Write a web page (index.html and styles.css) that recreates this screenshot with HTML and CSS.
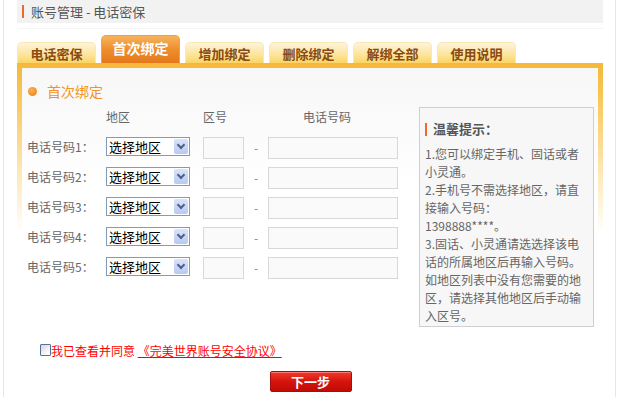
FILE: index.html
```html
<!DOCTYPE html>
<html lang="zh-CN">
<head>
  <meta charset="UTF-8" />
  <title>电话密保</title>
  <link rel="stylesheet" href="styles.css">
</head>
<body>
<div class="frame">

  <div class="crumb"><span class="bar"></span>账号管理 - 电话密保</div>
  <div class="rule"></div>

  <nav class="tabs">
    <a href="#">电话密保</a>
    <a href="#" class="on">首次绑定</a>
    <a href="#">增加绑定</a>
    <a href="#">删除绑定</a>
    <a href="#">解绑全部</a>
    <a href="#">使用说明</a>
  </nav>

  <div class="panel">
    <div class="inner">
      <h2 class="title"><span class="dot"></span>首次绑定</h2>

      <div class="body">
        <div class="form" id="form">
          <div class="row head">
            <span></span>
            <span>地区</span>
            <span>区号</span>
            <span></span>
            <span class="num">电话号码</span>
          </div>
        </div>

        <div class="tips">
          <h3><span class="bar"></span>温馨提示：</h3>
          <p>1.您可以绑定手机、固话或者小灵通。</p>
          <p>2.手机号不需选择地区，请直接输入号码：<br>1398888****。</p>
          <p>3.固话、小灵通请选选择该电话的所属地区后再输入号码。如地区列表中没有您需要的地区，请选择其他地区后手动输入区号。</p>
        </div>
      </div>

      <div class="agree">
        <input type="checkbox" id="agree"><label for="agree">我已查看并同意</label>&nbsp;<a href="#">《完美世界账号安全协议》</a>
      </div>

      <div class="actions">
        <button type="button" class="next">下一步</button>
      </div>
    </div>
  </div>
</div>

<script>
  const form = document.getElementById('form');
  for (let i = 1; i <= 5; i++) {
    const row = document.createElement('div');
    row.className = 'row';
    row.innerHTML = `
      <label>电话号码${i}：</label>
      <span class="sel"><select><option>选择地区</option></select><span class="arrow"></span></span>
      <input type="text" class="area">
      <span class="dash">-</span>
      <input type="text" class="phone">
    `;
    form.appendChild(row);
  }
</script>
</body>
</html>
```

FILE: styles.css
```css
body {
  margin: 0;
  font-family: "Noto Sans CJK SC", "DejaVu Sans", sans-serif;
  font-size: 12px;
  color: #666;
  background: #fff;
}
.frame {
  margin: 0 5px 0 3px;
  min-height: 397px;
  border-left: 1px solid #e6e6e6;
  border-right: 1px solid #e6e6e6;
  padding: 0 12px 0 13px;
}
.crumb {
  height: 23px;
  background: #f2f2f2;
  display: flex;
  align-items: center;
  padding-left: 5px;
  font-size: 13px;
  color: #555;
}
.crumb .bar {
  width: 2px;
  height: 13px;
  background: #ef6a2a;
  margin-right: 7px;
}
.rule {
  height: 1px;
  background: #f4f4f4;
  margin-top: 5px;
}

.tabs {
  display: flex;
  align-items: flex-end;
  gap: 5px;
  height: 34px;
}
.tabs a {
  width: 77px;
  height: 20px;
  line-height: 22px;
  text-align: center;
  text-decoration: none;
  font-weight: 700;
  font-size: 13px;
  color: #8b4a12;
  border-radius: 5px 5px 0 0;
  background: linear-gradient(#fdf4dc, #fce49a 60%, #fbd464);
  border: 1px solid #fae7b6;
  border-bottom: none;
}
.tabs a.on {
  height: 27px;
  line-height: 24px;
  font-size: 14px;
  color: #fff;
  border-color: #f0a243;
  background: linear-gradient(#f7b25c, #ee8e2d 50%, #e4781b);
}

.panel {
  padding: 5px 5px 0;
  background: linear-gradient(#f5b83a, #f8c552 30px, #fde8b8 110px, #fff 170px);
}
.inner {
  background: linear-gradient(#f7f7f7, #fff 120px);
  padding: 13px 4px 6px 5px;
  min-height: 310px;
}
.title {
  margin: 0;
  display: flex;
  align-items: center;
  font-size: 14px;
  font-weight: 400;
  color: #f29424;
  height: 20px;
}
.title .dot {
  width: 9px;
  height: 9px;
  border-radius: 50%;
  background: radial-gradient(circle at 40% 35%, #fbb24a, #ec7d12);
  margin: 0 10px 0 1px;
}

.body {
  display: flex;
  justify-content: space-between;
  align-items: flex-start;
  margin-top: 6px;
}
.row {
  display: grid;
  grid-template-columns: 79px 97px 41px 24px 130px;
  align-items: center;
  height: 30px;
}
.row.head {
  height: 18px;
  margin-bottom: 6px;
}
.row.head .num {
  padding-left: 35px;
}
.row label {
  color: #666;
}
.sel {
  position: relative;
  width: 84px;
  height: 19px;
}
.sel select {
  appearance: none;
  display: block;
  width: 84px;
  height: 19px;
  margin: 0;
  border: 1px solid #7f9db9;
  background: #fff;
  font-family: inherit;
  font-size: 13px;
  color: #000;
  padding: 0 0 0 2px;
  line-height: 17px;
}
.sel .arrow {
  position: absolute;
  right: 2px;
  top: 2px;
  width: 14px;
  height: 15px;
  background: linear-gradient(#d9e3fb, #b7c9f4);
  border-radius: 2px;
  pointer-events: none;
}
.sel .arrow::after {
  content: "";
  position: absolute;
  left: 4px;
  top: 3px;
  width: 4px;
  height: 4px;
  border-right: 2px solid #4d6185;
  border-bottom: 2px solid #4d6185;
  transform: rotate(45deg);
}
.row input {
  height: 22px;
  box-sizing: border-box;
  border: 1px solid #d8d8d8;
  background: #fafafa;
  margin: 3px 0 0;
  padding: 0 3px;
}
.row .area {
  width: 41px;
}
.row .phone {
  width: 130px;
}
.row .dash {
  text-align: center;
  color: #888;
  margin-top: 3px;
}

.tips {
  width: 162px;
  border: 1px solid #cfcfcf;
  background: #f7f7f7;
  padding: 12px 6px 1px 5px;
  color: #666;
  font-size: 12px;
  line-height: 18px;
}
.tips h3 {
  margin: 0 0 7px;
  height: 18px;
  display: flex;
  align-items: center;
  font-size: 13px;
  color: #555;
}
.tips h3 .bar {
  width: 2px;
  height: 13px;
  background: #ef6a2a;
  margin-right: 6px;
}
.tips p {
  margin: 0;
}

.agree {
  display: flex;
  align-items: center;
  height: 18px;
  margin: 14px 0 0 13px;
  color: #f00;
  font-size: 12px;
}
.agree input {
  appearance: none;
  margin: 0;
  width: 11px;
  height: 12px;
  border: 1px solid #56709a;
  border-radius: 1px;
  background: linear-gradient(135deg, #d4d4d4, #f4f4f4 60%, #fff);
}
.agree a {
  color: #f00;
  text-decoration: underline;
}
.actions {
  text-align: center;
  margin-top: 12px;
}
.next {
  width: 82px;
  height: 21px;
  border: 1px solid #a40e0e;
  border-radius: 2px;
  background: linear-gradient(#ee3d2a, #d6140d 50%, #c00b06);
  color: #fff;
  font-family: inherit;
  font-weight: 700;
  font-size: 13px;
  line-height: 19px;
  padding: 0;
  box-shadow: inset 0 1px 0 #f77;
}
```
